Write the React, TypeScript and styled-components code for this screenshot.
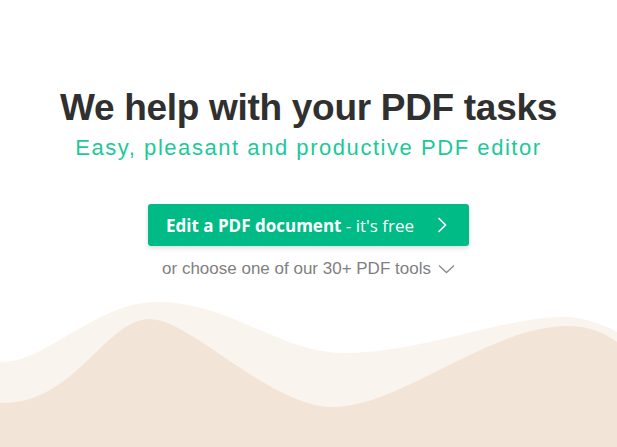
import React from 'react';
import styled, {createGlobalStyle} from 'styled-components';

const GlobalStyle = createGlobalStyle`
  html, body {
    margin: 0;
    padding: 0;
    background: #ffffff;
  }
  body {
    font-family: 'Liberation Sans', Arial, sans-serif;
  }
`;

const Page = styled.div`
  display: flex;
  flex-direction: column;
  min-height: 100vh;
  overflow: hidden;
`;

const Hero = styled.section`
  display: flex;
  flex-direction: column;
  align-items: center;
  padding-top: 86px;
`;

const Title = styled.h1`
  margin: 0;
  font-family: 'Liberation Sans', Arial, sans-serif;
  font-weight: 700;
  font-size: 37px;
  line-height: 44px;
  letter-spacing: -0.3px;
  color: #303030;
`;

const Subtitle = styled.p`
  margin: 4px 0 0;
  font-family: 'Liberation Sans', Arial, sans-serif;
  font-size: 22px;
  line-height: 27px;
  letter-spacing: 1.55px;
  color: #1cc99a;
`;

const CtaButton = styled.a`
  display: flex;
  align-items: center;
  box-sizing: border-box;
  width: 321px;
  height: 42px;
  margin-top: 43px;
  padding: 0 22px 0 18px;
  border-radius: 3px;
  background: #00bb85;
  box-shadow: 0 2px 5px rgba(0, 0, 0, 0.14);
  color: #ffffff;
  font-family: 'Open Sans', 'Liberation Sans', sans-serif;
  font-size: 17px;
  text-decoration: none;
  cursor: pointer;
`;

const CtaLabel = styled.span`
  flex: 1;
  white-space: nowrap;
  b {
    font-weight: 700;
  }
`;

const ToolsLink = styled.div`
  display: flex;
  align-items: center;
  gap: 7px;
  margin-top: 12px;
  font-family: 'Liberation Sans', Arial, sans-serif;
  font-size: 17px;
  line-height: 22px;
  color: #7f7f7f;
`;

const Waves = styled.svg`
  display: block;
  margin-top: auto;
  width: 100%;
  height: 147px;
`;

const ChevronRight = () => (
  <svg width="10" height="16" viewBox="0 0 10 16" fill="none">
    <path d="M1.5 1 L8.5 8 L1.5 15" stroke="#ffffff" strokeWidth="1.6" />
  </svg>
);

const ChevronDown = () => (
  <svg width="17" height="10" viewBox="0 0 17 10" fill="none">
    <path d="M1 1.5 L8.5 8.5 L16 1.5" stroke="#8a8a8a" strokeWidth="1.3" />
  </svg>
);

const App: React.FC = () => {
  return (
    <Page>
      <GlobalStyle />
      <Hero>
        <Title>We help with your PDF tasks</Title>
        <Subtitle>Easy, pleasant and productive PDF editor</Subtitle>
        <CtaButton>
          <CtaLabel>
            <b>Edit a PDF document</b> - it's free
          </CtaLabel>
          <ChevronRight />
        </CtaButton>
        <ToolsLink>
          <span>or choose one of our 30+ PDF tools</span>
          <ChevronDown />
        </ToolsLink>
      </Hero>
      <Waves viewBox="0 300 617 147" preserveAspectRatio="none">
        <path
          fill="#faf4ee"
          d="M0 362 C45 364 95 302 157 302 C230 302 280 353 345 353 C420 353 500 318 562 317 C585 317 605 325 617 332 L617 447 L0 447 Z"
        />
        <path
          fill="#f3e4d8"
          d="M0 403 C75 405 105 319 150 319 C190 319 270 407 333 407 C400 407 490 326 567 326 C590 326 605 333 617 342 L617 447 L0 447 Z"
        />
      </Waves>
    </Page>
  );
};

export default App;
